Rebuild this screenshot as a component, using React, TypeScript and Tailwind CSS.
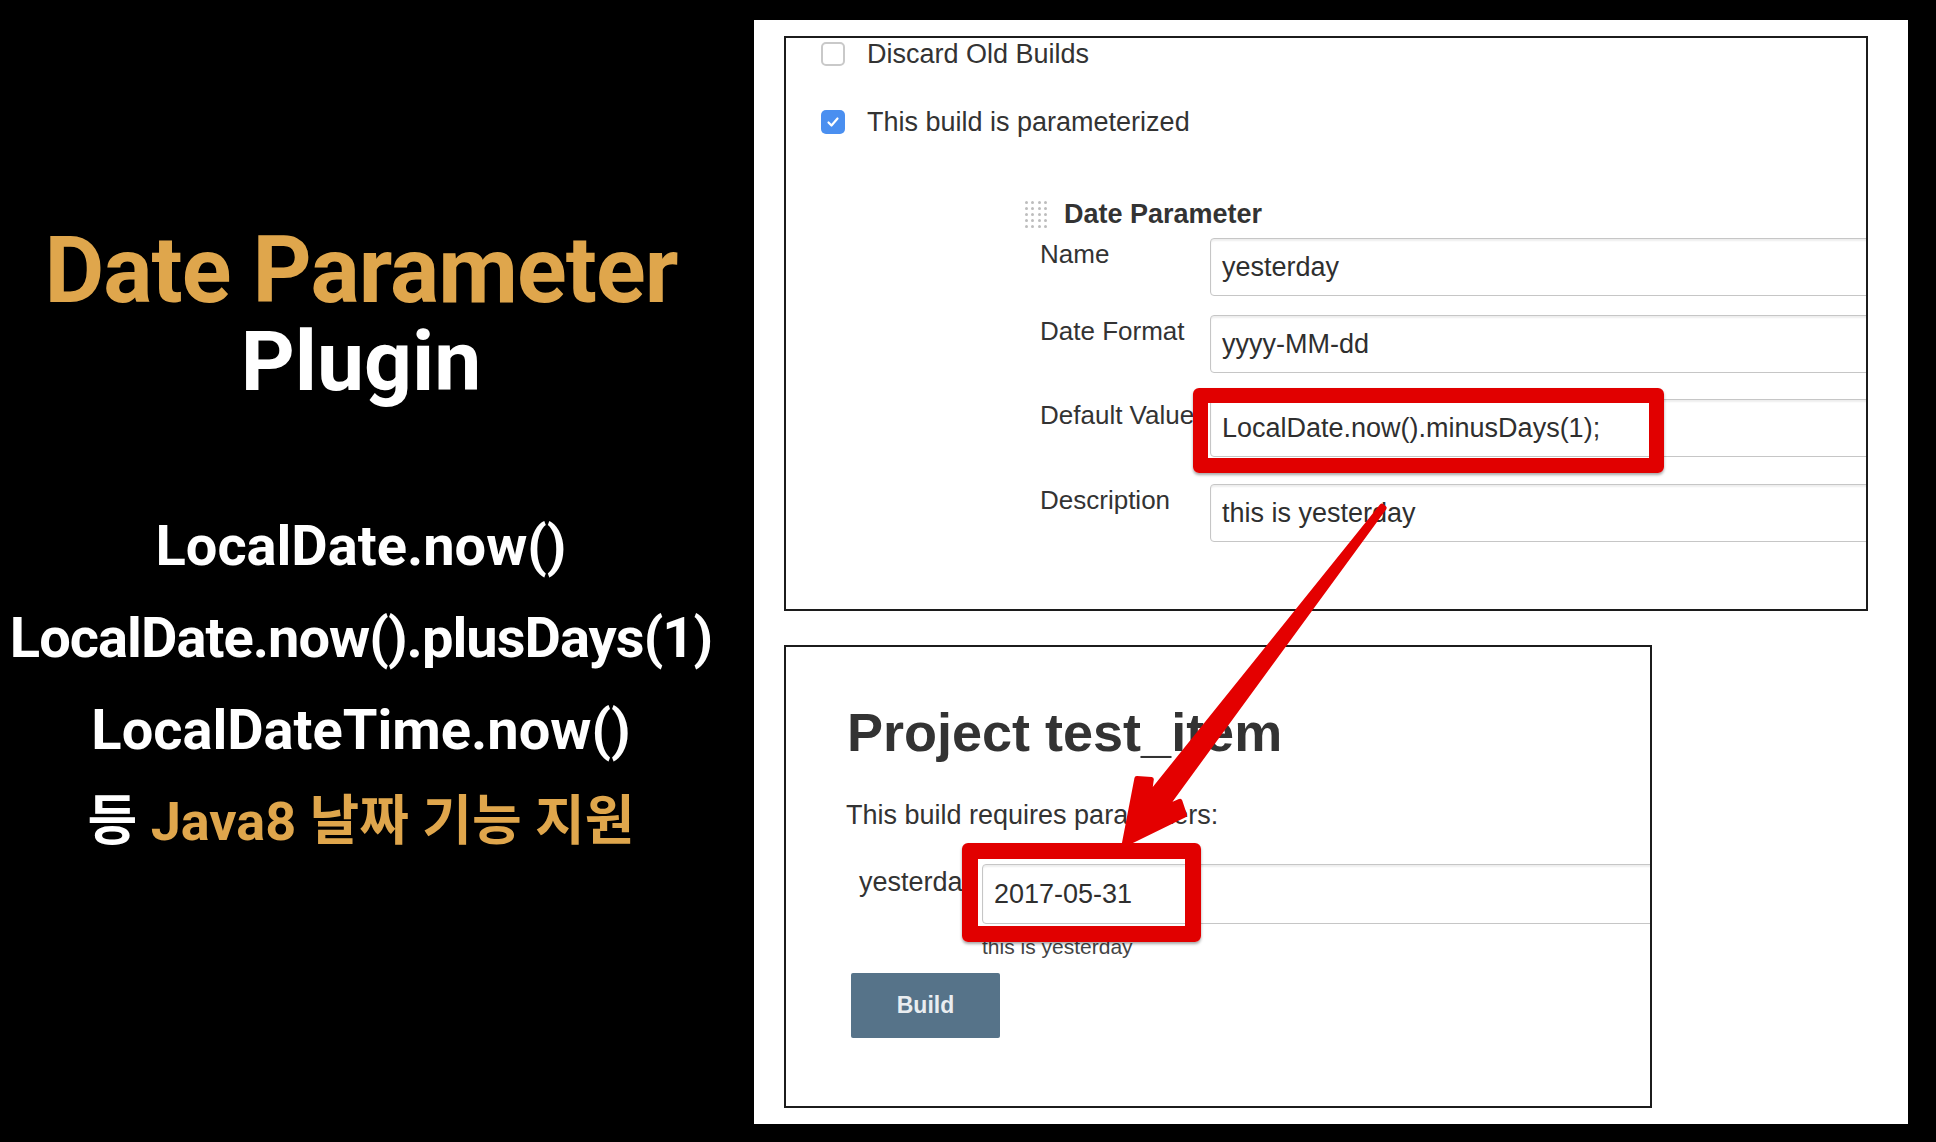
import React from "react";

// arrow drawn from the description field down to the build date field
const TIP = { x: 1123, y: 846 };
const TAIL = { x: 1383, y: 507 };

function arrowPoints() {
  const dx = TAIL.x - TIP.x;
  const dy = TAIL.y - TIP.y;
  const len = Math.hypot(dx, dy);
  const ux = dx / len;
  const uy = dy / len;
  const px = -uy;
  const py = ux;
  const pt = (a: number, l: number) =>
    `${(TIP.x + ux * a + px * l).toFixed(1)},${(TIP.y + uy * a + py * l).toFixed(1)}`;
  return [
    pt(2, 0),
    pt(62, 30),
    pt(70, 18),
    pt(56, 10),
    pt(len, 1.4),
    pt(len, -1.4),
    pt(56, -10),
    pt(70, -18),
    pt(62, -30),
  ].join(" ");
}

const Checkbox = ({ checked }: { checked?: boolean }) =>
  checked ? (
    <div className="w-[24px] h-[24px] rounded-[5px] bg-[#4a8ff0] flex items-center justify-center">
      <svg width="14" height="14" viewBox="0 0 14 14">
        <polyline points="2.5,7.5 5.5,10.5 11.5,3.5" fill="none" stroke="white" strokeWidth="2.2" strokeLinecap="round" strokeLinejoin="round" />
      </svg>
    </div>
  ) : (
    <div className="w-[24px] h-[24px] rounded-[5px] border-2 border-[#c9c9c9] bg-white" />
  );

const DragGrid = () => (
  <div className="grid grid-cols-4 gap-x-[3px] gap-y-[3px] w-[22px]">
    {Array.from({ length: 20 }).map((_, i) => (
      <div key={i} className="w-[3px] h-[3px] bg-[#bdbdbd] rounded-full" />
    ))}
  </div>
);

const Field = ({ value, width = 720 }: { value: string; width?: number }) => (
  <div
    className="h-full border border-[#c6c6c6] rounded-[4px] bg-white shadow-[inset_0_2px_2px_rgba(0,0,0,0.07)] flex items-center pl-[11px] text-[27px] text-[#2f2f2f] whitespace-nowrap"
    style={{ width }}
  >
    {value}
  </div>
);

const FormRow = ({
  label,
  value,
  className = "",
  mark,
}: {
  label: string;
  value: string;
  className?: string;
  mark?: boolean;
}) => (
  <div className={`flex h-[58px] ${className}`}>
    <div className="w-[170px] shrink-0 text-[26px] leading-[32px] text-[#333] whitespace-nowrap">{label}</div>
    <div className="relative h-full">
      <Field value={value} />
      {mark && (
        <div className="absolute left-[-17px] top-[-11px] w-[471px] h-[85px] border-[15px] border-[#e10000] rounded-[6px] shadow-[0_2px_3px_rgba(0,0,0,0.35)] z-10" />
      )}
    </div>
  </div>
);

export default function App() {
  return (
    <div className="relative w-[1936px] h-[1142px] bg-black flex overflow-hidden">
      {/* left slide text */}
      <div className="w-[722px] shrink-0 flex flex-col items-center pt-[225px] font-['Roboto','Noto_Sans_CJK_KR',sans-serif] font-bold whitespace-nowrap">
        <div className="text-[92px] leading-[91px] text-[#dfa64c] tracking-[-0.01em]">Date Parameter</div>
        <div className="text-[84px] leading-[91px] text-white">Plugin</div>
        <div className="mt-[93px] flex flex-col items-center text-white leading-[92px]">
          <div className="text-[56px]">LocalDate.now()</div>
          <div className="text-[56px] tracking-[-0.017em]">LocalDate.now().plusDays(1)</div>
          <div className="text-[56px]">LocalDateTime.now()</div>
          <div className="text-[54px]">
            등 <span className="text-[#dfa64c]">Java8 날짜 기능 지원</span>
          </div>
        </div>
      </div>

      {/* jenkins screenshot panel */}
      <div className="mt-[20px] ml-[32px] w-[1154px] h-[1104px] bg-white pt-[16px] pl-[30px] flex flex-col font-['Liberation_Sans',Arial,sans-serif] text-[#333]">
        <div className="w-[1084px] h-[575px] shrink-0 border-2 border-[#1c1c1c] overflow-hidden pl-[35px] pt-[4px]">
          <div className="flex items-center h-[24px] gap-[22px]">
            <Checkbox />
            <span className="text-[27px]">Discard Old Builds</span>
          </div>
          <div className="flex items-center h-[24px] gap-[22px] mt-[44px]">
            <Checkbox checked />
            <span className="text-[27px]">This build is parameterized</span>
          </div>

          <div className="ml-[204px] mt-[66px]">
            <div className="flex items-center h-[28px] gap-[17px]">
              <DragGrid />
              <span className="text-[27px] font-bold">Date Parameter</span>
            </div>
            <div className="ml-[15px] mt-[10px]">
              <FormRow label="Name" value="yesterday" />
              <FormRow label="Date Format" value="yyyy-MM-dd" className="mt-[19px]" />
              <FormRow label="Default Value" value="LocalDate.now().minusDays(1);" className="mt-[26px]" mark />
              <FormRow label="Description" value="this is yesterday" className="mt-[27px]" />
            </div>
          </div>
        </div>

        <div className="mt-[34px] w-[868px] h-[463px] shrink-0 border-2 border-[#1c1c1c] overflow-hidden pl-[61px] pt-[58px]">
          <div className="text-[54px] leading-[54px] font-bold text-[#333] whitespace-nowrap">Project test_item</div>
          <div className="mt-[40px] text-[27px] leading-[32px] -ml-[1px]">This build requires parameters:</div>
          <div className="mt-[33px] flex h-[60px] ml-[12px]">
            <div className="w-[123px] shrink-0 text-[27px] leading-[32px] pt-[2px] whitespace-nowrap">yesterday</div>
            <div className="relative h-full">
              <Field value="2017-05-31" width={700} />
              <div className="absolute left-[-20px] top-[-21px] w-[239px] h-[99px] border-[16px] border-[#e10000] rounded-[6px] shadow-[0_2px_3px_rgba(0,0,0,0.35)] z-10" />
            </div>
          </div>
          <div className="ml-[135px] mt-[11px] text-[21px] leading-[24px] text-[#444]">this is yesterday</div>
          <div className="mt-[14px] ml-[4px] w-[149px] h-[65px] bg-[#567389] rounded-[2px] flex items-center justify-center text-[23px] font-bold text-[#e9edf0]">
            Build
          </div>
        </div>
      </div>

      {/* overlay arrow */}
      <svg className="absolute left-0 top-0 pointer-events-none z-20" width="1936" height="1142" viewBox="0 0 1936 1142">
        <polygon points={arrowPoints()} fill="#e40000" stroke="#e40000" strokeWidth="5" strokeLinejoin="round" />
      </svg>
    </div>
  );
}
